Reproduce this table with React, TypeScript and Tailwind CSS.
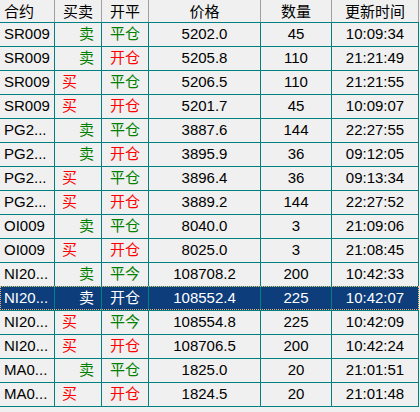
import React from "react";

type Row = [string, string, string, string, string, string];

const rows: Row[] = [
  ["SR009", "卖", "平仓", "5202.0", "45", "10:09:34"],
  ["SR009", "卖", "开仓", "5205.8", "110", "21:21:49"],
  ["SR009", "买", "平仓", "5206.5", "110", "21:21:55"],
  ["SR009", "买", "开仓", "5201.7", "45", "10:09:07"],
  ["PG2...", "卖", "平仓", "3887.6", "144", "22:27:55"],
  ["PG2...", "卖", "开仓", "3895.9", "36", "09:12:05"],
  ["PG2...", "买", "平仓", "3896.4", "36", "09:13:34"],
  ["PG2...", "买", "开仓", "3889.2", "144", "22:27:52"],
  ["OI009", "卖", "平仓", "8040.0", "3", "21:09:06"],
  ["OI009", "买", "开仓", "8025.0", "3", "21:08:45"],
  ["NI20...", "卖", "平今", "108708.2", "200", "10:42:33"],
  ["NI20...", "卖", "开仓", "108552.4", "225", "10:42:07"],
  ["NI20...", "买", "平今", "108554.8", "225", "10:42:09"],
  ["NI20...", "买", "开仓", "108706.5", "200", "10:42:24"],
  ["MA0...", "卖", "平仓", "1825.0", "20", "21:01:51"],
  ["MA0...", "买", "开仓", "1824.5", "20", "21:01:48"],
];

const headers = ["合约", "买卖", "开平", "价格", "数量", "更新时间"];
const widths = ["w-[55px]", "w-[47px]", "w-[47px]", "w-[112px]", "w-[71px]", "w-[87px]"];

export default function App() {
  return (
    <div
      className="w-[420px] h-[412px] bg-[#f0f0f0] overflow-hidden text-[15px] text-black"
      style={{ fontFamily: '"Liberation Sans", "Noto Sans CJK SC", sans-serif' }}
    >
      <div className="flex h-[23px] border-b border-[#008080] w-[419px]">
        {headers.map((h, i) => (
          <div
            key={h}
            className={`${widths[i]} h-[22px] border-r border-[#a0a0a0] flex items-center ${i === 0 ? "justify-start pl-[4px]" : "justify-center"} leading-none`}
          >
            {h}
          </div>
        ))}
      </div>
      {rows.map((r, idx) => {
        const sel = idx === 11;
        const buy = r[1] === "买";
        const open = r[2] === "开仓";
        return (
          <div key={idx} className={`relative flex h-[24px] w-[419px] ${sel ? "bg-[#0e3d7c] text-white" : ""}`}>
            <div className={`${widths[0]} border-r border-b border-[#008080] flex items-center pl-[4px]`}>{r[0]}</div>
            <div
              className={`${widths[1]} border-r border-b border-[#008080] flex items-center ${buy ? "justify-start pl-[7px]" : "justify-end pr-[7px]"} ${sel ? "" : buy ? "text-[#ff0000]" : "text-[#008000]"}`}
            >
              {r[1]}
            </div>
            <div
              className={`${widths[2]} border-r border-b border-[#008080] flex items-center justify-center ${sel ? "" : open ? "text-[#ff0000]" : "text-[#008000]"}`}
            >
              {r[2]}
            </div>
            <div className={`${widths[3]} border-r border-b border-[#008080] flex items-center justify-center`}>{r[3]}</div>
            <div className={`${widths[4]} border-r border-b border-[#008080] flex items-center justify-center`}>{r[4]}</div>
            <div className={`${widths[5]} border-r border-b border-[#008080] flex items-center justify-center`}>{r[5]}</div>
            {sel && (
              <div className="absolute left-0 top-[-1px] w-[419px] h-[24px] border border-dotted border-[#f0b070] pointer-events-none" />
            )}
          </div>
        );
      })}
    </div>
  );
}
